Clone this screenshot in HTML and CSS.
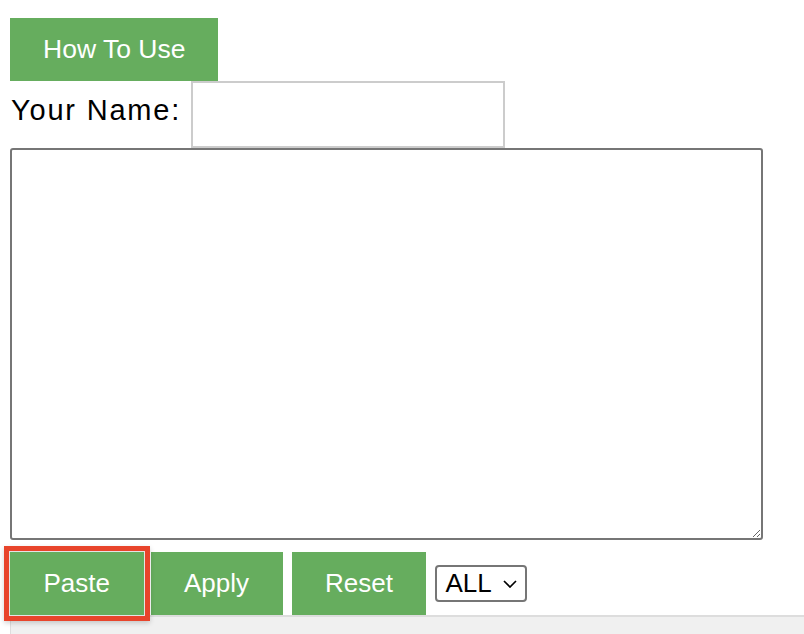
FILE: index.html
```html
<!DOCTYPE html>
<html>
<head>
<meta charset="utf-8">
<link rel="stylesheet" href="styles.css">
</head>
<body>
<div class="page">
  <div class="top">
    <button class="btn btn-howto">How To Use</button>
  </div>
  <div class="name-row">
    <label class="name-label" for="name">Your Name:</label>
    <input class="name-input" id="name" type="text">
  </div>
  <textarea class="editor"></textarea>
  <div class="actions">
    <button class="btn btn-paste">Paste</button>
    <button class="btn btn-apply">Apply</button>
    <button class="btn btn-reset">Reset</button>
    <select class="scope">
      <option>ALL</option>
    </select>
  </div>
  <div class="bottom-bar"></div>
</div>
</body>
</html>
```

FILE: styles.css
```css
html, body {
  margin: 0;
  padding: 0;
  background: #ffffff;
  overflow: hidden;
}
.page {
  padding: 18px 0 0 10px;
  font-family: "Liberation Sans", Arial, sans-serif;
}
.top {
  display: flex;
}
.btn {
  font-family: "Liberation Sans", Arial, sans-serif;
  font-size: 26px;
  line-height: 31px;
  color: #ffffff;
  background: #66ad5e;
  border: none;
  border-radius: 0;
  padding: 16px 32px;
  margin: 0;
  cursor: pointer;
}
.btn-howto {
  font-size: 26.5px;
  padding: 16px 33px;
}
.name-row {
  display: flex;
  align-items: center;
}
.name-label {
  font-family: "Liberation Sans", Arial, sans-serif;
  font-size: 29px;
  letter-spacing: 1.8px;
  color: #000;
  margin-left: 1px;
  margin-right: 10px;
  margin-top: -9px;
}
.name-input {
  box-sizing: border-box;
  width: 314px;
  height: 67px;
  border: 2px solid #cccccc;
  border-radius: 0;
  margin: 0;
  padding: 0 8px;
  font-size: 20px;
  outline: none;
}
.editor {
  display: block;
  box-sizing: border-box;
  width: 753px;
  height: 392px;
  margin: 0;
  border: 2px solid #767676;
  border-radius: 3px;
  resize: both;
  outline: none;
}
.actions {
  display: flex;
  align-items: center;
  margin-top: 12px;
}
.btn-paste {
  padding: 16px 33.5px;
  margin-right: 7px;
  box-shadow: 0 0 0 1px #e4e4e4, 0 0 0 6px #e8442b, 0 2px 5px 6px rgba(0, 0, 0, 0.18);
  position: relative;
  z-index: 1;
}
.btn-apply {
  padding: 16px 33.5px;
  margin-right: 9px;
}
.btn-reset {
  padding: 16px 33.5px;
  margin-right: 9px;
}
.scope {
  -webkit-appearance: none;
  appearance: none;
  box-sizing: border-box;
  width: 92px;
  height: 37px;
  border: 2px solid #767676;
  border-radius: 4px;
  background-color: #ffffff;
  background-image: url("data:image/svg+xml;utf8,<svg xmlns='http://www.w3.org/2000/svg' width='14' height='8' viewBox='0 0 14 8'><path d='M1 1 L7 7 L13 1' fill='none' stroke='black' stroke-width='1.7'/></svg>");
  background-size: 14px 8px;
  background-repeat: no-repeat;
  background-position: right 8px center;
  font-family: "Liberation Sans", Arial, sans-serif;
  font-size: 26px;
  color: #000;
  padding: 0 0 0 8px;
  margin: 0;
  line-height: 33px;
}
.bottom-bar {
  height: 40px;
  background: #f0f0f0;
  border-top: 2px solid #dddddd;
  border-left: 1px solid #dddddd;
}
```
